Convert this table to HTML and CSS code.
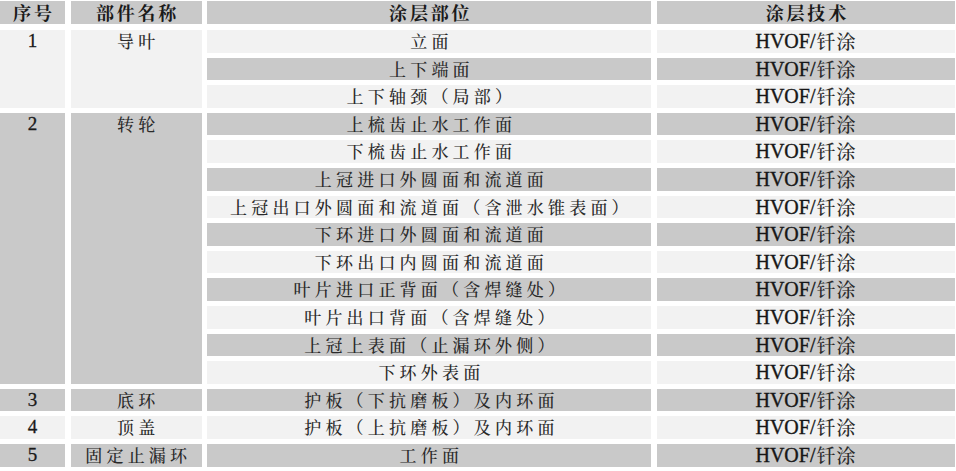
FILE: index.html
```html
<!DOCTYPE html>
<html lang="zh-CN">
<head>
<meta charset="utf-8">
<title>涂层部位</title>
<link rel="stylesheet" href="styles.css">
</head>
<body>
<div class="table">
  <div class="cell head dark"><span class="cn">序号</span></div>
  <div class="cell head dark"><span class="cn">部件名称</span></div>
  <div class="cell head dark"><span class="cn">涂层部位</span></div>
  <div class="cell head dark"><span class="cn">涂层技术</span></div>

  <div class="cell num light span3">1</div>
  <div class="cell name light span3"><span class="cn">导叶</span></div>
  <div class="cell part light"><span class="cn">立面</span></div>
  <div class="cell tech light"><span class="lat">HVOF/</span><span class="cn2">钎涂</span></div>
  <div class="cell part dark"><span class="cn">上下端面</span></div>
  <div class="cell tech dark"><span class="lat">HVOF/</span><span class="cn2">钎涂</span></div>
  <div class="cell part light"><span class="cn">上下轴颈（局部）</span></div>
  <div class="cell tech light"><span class="lat">HVOF/</span><span class="cn2">钎涂</span></div>

  <div class="cell num dark span10">2</div>
  <div class="cell name dark span10"><span class="cn">转轮</span></div>
  <div class="cell part dark"><span class="cn">上梳齿止水工作面</span></div>
  <div class="cell tech dark"><span class="lat">HVOF/</span><span class="cn2">钎涂</span></div>
  <div class="cell part light"><span class="cn">下梳齿止水工作面</span></div>
  <div class="cell tech light"><span class="lat">HVOF/</span><span class="cn2">钎涂</span></div>
  <div class="cell part dark"><span class="cn">上冠进口外圆面和流道面</span></div>
  <div class="cell tech dark"><span class="lat">HVOF/</span><span class="cn2">钎涂</span></div>
  <div class="cell part light"><span class="cn">上冠出口外圆面和流道面（含泄水锥表面）</span></div>
  <div class="cell tech light"><span class="lat">HVOF/</span><span class="cn2">钎涂</span></div>
  <div class="cell part dark"><span class="cn">下环进口外圆面和流道面</span></div>
  <div class="cell tech dark"><span class="lat">HVOF/</span><span class="cn2">钎涂</span></div>
  <div class="cell part light"><span class="cn">下环出口内圆面和流道面</span></div>
  <div class="cell tech light"><span class="lat">HVOF/</span><span class="cn2">钎涂</span></div>
  <div class="cell part dark"><span class="cn">叶片进口正背面（含焊缝处）</span></div>
  <div class="cell tech dark"><span class="lat">HVOF/</span><span class="cn2">钎涂</span></div>
  <div class="cell part light"><span class="cn">叶片出口背面（含焊缝处）</span></div>
  <div class="cell tech light"><span class="lat">HVOF/</span><span class="cn2">钎涂</span></div>
  <div class="cell part dark"><span class="cn">上冠上表面（止漏环外侧）</span></div>
  <div class="cell tech dark"><span class="lat">HVOF/</span><span class="cn2">钎涂</span></div>
  <div class="cell part light"><span class="cn">下环外表面</span></div>
  <div class="cell tech light"><span class="lat">HVOF/</span><span class="cn2">钎涂</span></div>

  <div class="cell num dark">3</div>
  <div class="cell name dark"><span class="cn">底环</span></div>
  <div class="cell part dark"><span class="cn">护板（下抗磨板）及内环面</span></div>
  <div class="cell tech dark"><span class="lat">HVOF/</span><span class="cn2">钎涂</span></div>

  <div class="cell num light">4</div>
  <div class="cell name light"><span class="cn">顶盖</span></div>
  <div class="cell part light"><span class="cn">护板（上抗磨板）及内环面</span></div>
  <div class="cell tech light"><span class="lat">HVOF/</span><span class="cn2">钎涂</span></div>

  <div class="cell num dark">5</div>
  <div class="cell name dark"><span class="cn">固定止漏环</span></div>
  <div class="cell part dark"><span class="cn">工作面</span></div>
  <div class="cell tech dark"><span class="lat">HVOF/</span><span class="cn2">钎涂</span></div>
</div>
</body>
</html>
```

FILE: styles.css
```css
html, body {
  margin: 0;
  padding: 0;
  background: #ffffff;
}

body {
  padding-top: 1px;
  width: 956px;
  height: 471px;
  overflow: hidden;
  font-family: "Liberation Serif", "Noto Serif CJK SC", "Noto Sans CJK SC", serif;
  color: #1e1e1e;
}

.table {
  display: grid;
  grid-template-columns: 65px 131px 444px 298px;
  grid-template-rows: 24px repeat(16, 22.6px);
  column-gap: 5.67px;
  row-gap: 5px;
}

.cell {
  display: flex;
  justify-content: center;
  align-items: center;
  height: 22.6px;
  line-height: 22.6px;
  white-space: nowrap;
  box-sizing: border-box;
}

.dark { background: #c9c9c9; }
.light { background: #f2f2f2; }

.head {
  height: 23px;
  align-self: start;
  color: #1a1a1a;
}

.head .cn {
  font-weight: bold;
  font-size: 18px;
  letter-spacing: 2.8px;
  padding-left: 2.8px;
  color: #1a1a1a;
}

.span3 { grid-row: span 3; height: auto; align-items: flex-start; }
.span10 { grid-row: span 10; height: auto; align-items: flex-start; }

.num {
  font-size: 19px;
  color: #1a1a1a;
  -webkit-text-stroke: 0.3px #1a1a1a;
}

.cn {
  font-family: "Noto Serif CJK SC", "Noto Sans CJK SC", sans-serif;
  font-size: 17px;
  font-weight: 500;
  letter-spacing: 4.2px;
  padding-left: 4.2px;
  color: #2a2a2a;
}

.lat {
  font-size: 20px;
  color: #161616;
  -webkit-text-stroke: 0.35px #161616;
}

.cn2 {
  font-family: "Noto Serif CJK SC", "Noto Sans CJK SC", sans-serif;
  font-size: 19px;
  font-weight: 500;
  letter-spacing: 1px;
  padding-left: 1px;
  color: #2a2a2a;
}
```
